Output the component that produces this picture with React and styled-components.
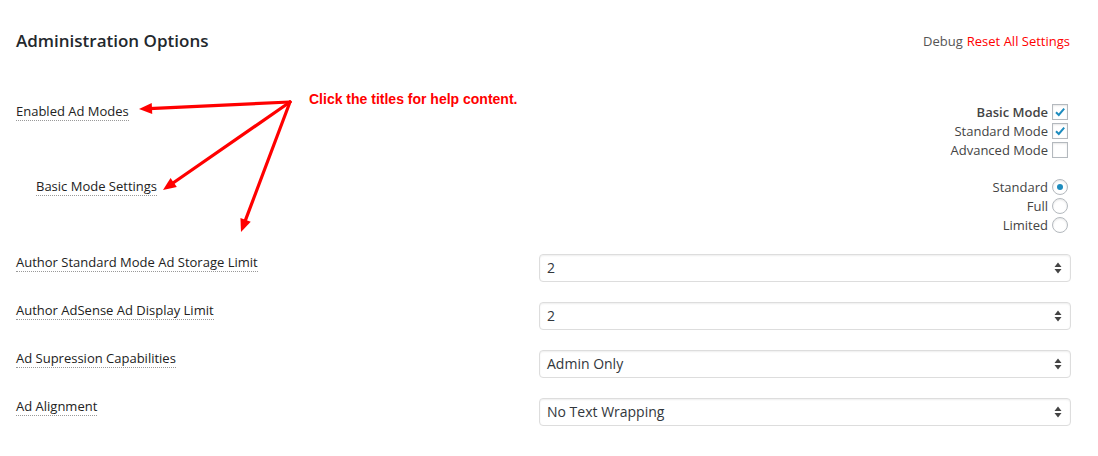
import React from "react";
import styled, { createGlobalStyle } from "styled-components";

const GlobalStyle = createGlobalStyle`
  html, body { margin: 0; padding: 0; background: #fff; }
  body { font-family: "Open Sans", "Liberation Sans", sans-serif; color: #23282d; }
`;

const Page = styled.div`
  position: relative;
  width: 1098px;
  height: 456px;
  box-sizing: border-box;
  padding: 29px 27px 0 16px;
`;

const Header = styled.div`
  display: flex;
  justify-content: space-between;
  align-items: center;
  height: 24px;
`;

const Title = styled.h2`
  margin: 0;
  font-size: 17px;
  font-weight: 600;
  color: #23282d;
  line-height: 24px;
`;

const HeaderLinks = styled.div`
  display: flex;
  gap: 4px;
  font-size: 13px;
  padding-right: 1px;
`;

const HeaderLink = styled.span`
  color: ${({ $danger }) => ($danger ? "#f00" : "#555")};
  cursor: pointer;
`;

const Form = styled.div`
  display: flex;
  flex-direction: column;
  margin-top: 49px;
`;

const Row = styled.div`
  display: grid;
  grid-template-columns: 523px 1fr;
  align-items: start;
  margin-bottom: ${({ $gap }) => $gap}px;
`;

const Label = styled.div`
  display: flex;
  line-height: 18px;
  padding-left: ${({ $indent }) => ($indent ? 20 : 0)}px;
  margin-top: ${({ $top }) => $top || 0}px;
`;

const HelpTitle = styled.span`
  font-size: 13px;
  line-height: 18px;
  color: #222;
  border-bottom: 1px dotted #999;
  cursor: help;
`;

const OptionList = styled.div`
  display: flex;
  flex-direction: column;
  align-items: flex-end;
  padding-right: 3px;
`;

const Option = styled.label`
  display: flex;
  align-items: center;
  gap: 4px;
  height: 19px;
  font-size: 13px;
  color: #444;
  font-weight: ${({ $bold }) => ($bold ? 600 : 400)};
`;

const Box = styled.span`
  position: relative;
  width: 14px;
  height: 14px;
  border: 1px solid #b4b9be;
  background: #fff;
  box-shadow: inset 0 1px 2px rgba(0, 0, 0, 0.1);
  border-radius: ${({ $round }) => ($round ? "50%" : "0")};
  display: flex;
  align-items: center;
  justify-content: center;
`;

const Dot = styled.span`
  width: 6px;
  height: 6px;
  border-radius: 50%;
  background: #1e8cbe;
`;

const Select = styled.div`
  display: flex;
  align-items: center;
  justify-content: space-between;
  height: 28px;
  box-sizing: border-box;
  border: 1px solid #ddd;
  border-radius: 4px;
  box-shadow: inset 0 1px 2px rgba(0, 0, 0, 0.07);
  padding: 0 8px 1px 7px;
  font-size: 14px;
  color: #32373c;
`;

const Overlay = styled.svg`
  position: absolute;
  left: 0;
  top: 0;
  pointer-events: none;
`;

const Note = styled.div`
  position: absolute;
  left: 309px;
  top: 91px;
  font-family: "Liberation Sans", Arial, sans-serif;
  font-weight: 700;
  font-size: 14px;
  color: #f00;
`;

const Check = () => (
  <svg width="12" height="12" viewBox="0 0 12 12">
    <path d="M2 6.2 L4.8 9 L10.2 2.6" fill="none" stroke="#1e8cbe" strokeWidth="2" />
  </svg>
);

const Checkbox = ({ label, checked, bold }) => (
  <Option $bold={bold}>
    {label}
    <Box>{checked && <Check />}</Box>
  </Option>
);

const Radio = ({ label, checked }) => (
  <Option>
    {label}
    <Box $round>{checked && <Dot />}</Box>
  </Option>
);

const Arrows = () => (
  <svg width="8" height="12" viewBox="0 0 8 12">
    <path d="M4 0.5 L7.5 5 H0.5 Z M4 11.5 L7.5 7 H0.5 Z" fill="#444" />
  </svg>
);

const SelectField = ({ value }) => (
  <Select>
    <span>{value}</span>
    <Arrows />
  </Select>
);

const arrowHead = (x1, y1, x2, y2) => {
  const a = Math.atan2(y2 - y1, x2 - x1);
  const len = 13;
  const w = 5.5;
  const bx = x2 - len * Math.cos(a);
  const by = y2 - len * Math.sin(a);
  const px = -Math.sin(a) * w;
  const py = Math.cos(a) * w;
  return `${x2},${y2} ${bx + px},${by + py} ${bx - px},${by - py}`;
};

const targets = [
  [139, 109],
  [163, 190],
  [241, 232],
];

const Annotation = () => (
  <Overlay width="1098" height="456">
    {targets.map(([x, y]) => {
      const a = Math.atan2(y - 102, x - 290);
      const ex = x - 10 * Math.cos(a);
      const ey = y - 10 * Math.sin(a);
      return (
        <g key={x}>
          <line x1="290" y1="102" x2={ex} y2={ey} stroke="#f00" strokeWidth="3.2" strokeLinecap="round" />
          <polygon points={arrowHead(290, 102, x, y)} fill="#f00" />
        </g>
      );
    })}
  </Overlay>
);

const selects = [
  ["Author Standard Mode Ad Storage Limit", "2"],
  ["Author AdSense Ad Display Limit", "2"],
  ["Ad Supression Capabilities", "Admin Only"],
  ["Ad Alignment", "No Text Wrapping"],
];

export default function App() {
  return (
    <>
      <GlobalStyle />
      <Page>
        <Header>
          <Title>Administration Options</Title>
          <HeaderLinks>
            <HeaderLink>Debug</HeaderLink>
            <HeaderLink $danger>Reset All Settings</HeaderLink>
          </HeaderLinks>
        </Header>
        <Form>
          <Row $gap={18}>
            <Label>
              <HelpTitle>Enabled Ad Modes</HelpTitle>
            </Label>
            <OptionList>
              <Checkbox label="Basic Mode" checked bold />
              <Checkbox label="Standard Mode" checked />
              <Checkbox label="Advanced Mode" />
            </OptionList>
          </Row>
          <Row $gap={20}>
            <Label $indent>
              <HelpTitle>Basic Mode Settings</HelpTitle>
            </Label>
            <OptionList>
              <Radio label="Standard" checked />
              <Radio label="Full" />
              <Radio label="Limited" />
            </OptionList>
          </Row>
          {selects.map(([label, value]) => (
            <Row key={label} $gap={20}>
              <Label $top={-1}>
                <HelpTitle>{label}</HelpTitle>
              </Label>
              <SelectField value={value} />
            </Row>
          ))}
        </Form>
        <Note>Click the titles for help content.</Note>
        <Annotation />
      </Page>
    </>
  );
}
